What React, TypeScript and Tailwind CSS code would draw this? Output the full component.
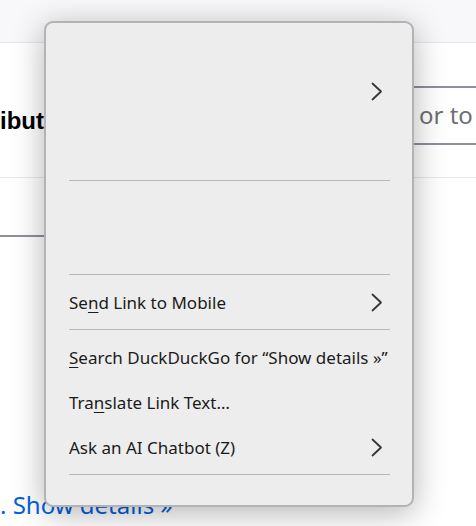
import React from 'react';

// Right-pointing chevron used for submenu rows
const Chevron: React.FC = () => (
  <svg width="12" height="19" viewBox="0 0 12 19" fill="none" className="shrink-0">
    <path d="M1.5 1.5 L10 9.5 L1.5 17.5" stroke="#363636" strokeWidth="1.8" strokeLinecap="round" strokeLinejoin="round" />
  </svg>
);

const Separator: React.FC = () => (
  <div className="mt-[4px] mb-[5px] ml-[23px] mr-[22px] h-px bg-[#b9b9b9]" />
);

const MenuRow: React.FC<{ children?: React.ReactNode; submenu?: boolean }> = ({ children, submenu }) => (
  <div className="flex h-[45px] items-center justify-between pl-[23px] pr-[29px]">
    <span className="whitespace-nowrap">{children}</span>
    {submenu && <Chevron />}
  </div>
);

const Key: React.FC<{ children: React.ReactNode }> = ({ children }) => (
  <span className="underline decoration-1 underline-offset-[3px]">{children}</span>
);

const App: React.FC = () => {
  return (
    <div className="relative h-[526px] w-[476px] overflow-hidden bg-white font-['Noto_Sans','Open_Sans',sans-serif]">
      {/* page behind the menu */}
      <div className="h-[43px] border-b border-[#e6e6e8] bg-[#f8f8fa]" />
      <div className="flex h-[135px] items-center justify-between border-b border-[#e8e8ea]">
        <span className="pt-[22px] font-['Liberation_Sans',sans-serif] text-[24px] font-bold leading-[28px] text-black">ibut</span>
        <div className="-mr-[24px] mt-[10px] flex h-[59px] w-[100px] items-center border-2 border-[#8f8f9d] pl-[17px] text-[24px] text-[#6f6f6f]">
          or to
        </div>
      </div>
      <div className="h-[57px]" />
      <div className="h-[2px] w-[200px] bg-[#8f8f9d]" />
      <div className="h-[253px]" />
      <div className="whitespace-nowrap text-[24px] leading-[30px] text-[#0061e0]">. Show details »</div>

      {/* context menu */}
      <div className="absolute left-[44px] top-[21px] w-[370px] rounded-[9px] border-2 border-[#b3b3b3] bg-[#ededed] text-[17px] text-[#1b1b1b] shadow-[0_6px_32px_rgba(0,0,0,0.3)]">
        <div className="h-[46px]" />
        <MenuRow submenu />
        <div className="h-[62px]" />
        <Separator />
        <div className="h-[84px]" />
        <Separator />
        <MenuRow submenu>
          Se<Key>n</Key>d Link to Mobile
        </MenuRow>
        <Separator />
        <MenuRow>
          <Key>S</Key>earch DuckDuckGo for “Show details »”
        </MenuRow>
        <MenuRow>
          Tra<Key>n</Key>slate Link Text…
        </MenuRow>
        <MenuRow submenu>Ask an AI Chatbot (Z)</MenuRow>
        <Separator />
        <div className="h-[25px]" />
      </div>
    </div>
  );
};

export default App;
